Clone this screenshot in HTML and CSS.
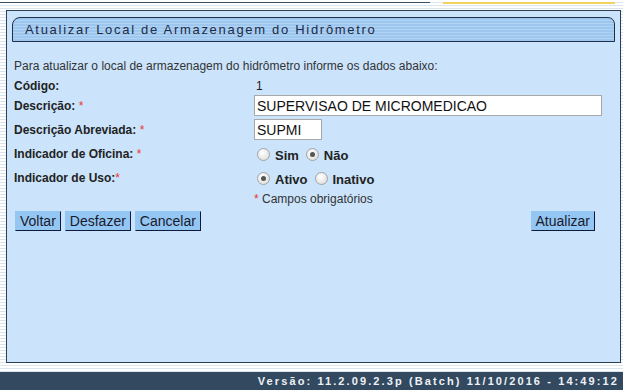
FILE: index.html
```html
<!DOCTYPE html>
<html lang="pt-BR">
<head>
  <meta charset="UTF-8">
  <title>Atualizar Local de Armazenagem do Hidrômetro</title>
  <link rel="stylesheet" href="styles.css">
</head>
<body>

  <div class="topline">
    <span class="topline-dark"></span>
    <span class="topline-gold"></span>
  </div>

  <div class="panel">
    <div class="tab-title">Atualizar Local de Armazenagem do Hidrômetro</div>

    <p class="intro">Para atualizar o local de armazenagem do hidrômetro informe os dados abaixo:</p>

    <form class="form-grid">
      <label class="lbl">Código:</label>
      <span class="val">1</span>

      <label class="lbl">Descrição: <span class="req">*</span></label>
      <input class="txt txt-long" type="text" value="SUPERVISAO DE MICROMEDICAO">

      <label class="lbl">Descrição Abreviada: <span class="req">*</span></label>
      <input class="txt txt-short" type="text" value="SUPMI">

      <label class="lbl row-gap">Indicador de Oficina: <span class="req">*</span></label>
      <span class="radios row-gap">
        <span class="radio"></span><b>Sim</b>
        <span class="radio on"></span><b>Não</b>
      </span>

      <label class="lbl">Indicador de Uso:<span class="req">*</span></label>
      <span class="radios">
        <span class="radio on"></span><b>Ativo</b>
        <span class="radio"></span><b>Inativo</b>
      </span>

      <span></span>
      <span class="note"><span class="req">*</span> Campos obrigatórios</span>
    </form>

    <div class="actions">
      <div class="actions-left">
        <button type="button" class="btn">Voltar</button>
        <button type="button" class="btn">Desfazer</button>
        <button type="button" class="btn">Cancelar</button>
      </div>
      <button type="button" class="btn">Atualizar</button>
    </div>
  </div>

  <footer>Versão: 11.2.09.2.3p (Batch) 11/10/2016 - 14:49:12</footer>

</body>
</html>
```

FILE: styles.css
```css
body {
  font-family: 'Liberation Sans', Arial, sans-serif;
  font-size: 12px;
  color: #222;
  margin: 0;
  width: 623px;
  height: 390px;
  overflow: hidden;
  background: repeating-linear-gradient(#ffffff 0 2px, #d9e5ee 2px 3px);
}

.topline {
  display: flex;
  height: 10px;
  padding-top: 2px;
  box-sizing: border-box;
}

.topline-dark {
  width: 430px;
  height: 1px;
  background-color: #3a4e63;
}

.topline-gold {
  width: 172px;
  height: 2px;
  margin-left: 13px;
  background-color: #f2d35c;
}

.panel {
  margin: 0 2px 0 6px;
  height: 353px;
  box-sizing: border-box;
  border: 1px solid #2c3f55;
  background-color: #cbe4fb;
  padding: 6px 5px 0 5px;
}

.tab-title {
  height: 25px;
  box-sizing: border-box;
  border: 1px solid #1f3049;
  border-radius: 8px 7px 0 0;
  background: repeating-linear-gradient(#9ec7ef 0 2px, #b3d3f3 2px 3px);
  padding: 4px 0 0 12px;
  font-size: 13px;
  letter-spacing: 1.7px;
  color: #1b2b45;
}

.intro {
  margin: 17px 0 0 2px;
  color: #333;
}

.form-grid {
  display: grid;
  grid-template-columns: 240px 1fr;
  align-items: center;
  margin: 4px 0 0 2px;
}

.lbl {
  font-weight: bold;
  color: #222;
}

.req {
  color: #e33;
  font-weight: normal;
}

.val {
  padding-left: 2px;
  height: 18px;
  line-height: 18px;
}

.form-grid .lbl {
  height: 18px;
  line-height: 18px;
}

.txt {
  font-family: 'Liberation Sans', Arial, sans-serif;
  font-size: 14px;
  color: #111;
  height: 21px;
  box-sizing: border-box;
  border: 1px solid #a9a9a9;
  background: #fff;
  padding: 0 2px;
  margin: 0;
}

.txt-long {
  width: 348px;
}

.txt-short {
  width: 68px;
  margin-top: 3px;
}

.form-grid > :nth-child(5),
.form-grid > :nth-child(6) {
  margin-top: 3px;
}

.form-grid > .row-gap {
  margin-top: 2px;
}

.radios {
  display: flex;
  align-items: center;
  height: 24px;
  padding-left: 3px;
  font-size: 13px;
}

.radios b {
  margin: 2px 7px 0 5px;
  color: #222;
}

.radio {
  width: 13px;
  height: 13px;
  border-radius: 50%;
  border: 1px solid #a3a3a3;
  background: radial-gradient(circle at 40% 35%, #ffffff, #d8d8d8);
  box-sizing: border-box;
  display: inline-flex;
  align-items: center;
  justify-content: center;
}

.radio.on::after {
  content: "";
  width: 5px;
  height: 5px;
  border-radius: 50%;
  background-color: #555;
}

.note {
  color: #333;
  height: 18px;
  line-height: 18px;
}

.actions {
  display: flex;
  justify-content: space-between;
  margin: 3px 20px 0 3px;
}

.actions-left {
  display: flex;
  gap: 4px;
}

.btn {
  font-family: 'Liberation Sans', Arial, sans-serif;
  font-size: 14px;
  color: #1a1a2a;
  background-color: #94c6f4;
  border: 1px solid #94c6f4;
  border-right-color: #0d1a3a;
  border-bottom-color: #0d1a3a;
  height: 20px;
  padding: 0 4px;
  margin: 0;
  line-height: 18px;
}

footer {
  margin-top: 9px;
  height: 18px;
  background-color: #33495f;
  color: #eef2f7;
  font-size: 11px;
  font-weight: bold;
  letter-spacing: 2.1px;
  text-align: right;
  padding-right: 4px;
  line-height: 18px;
}
```
